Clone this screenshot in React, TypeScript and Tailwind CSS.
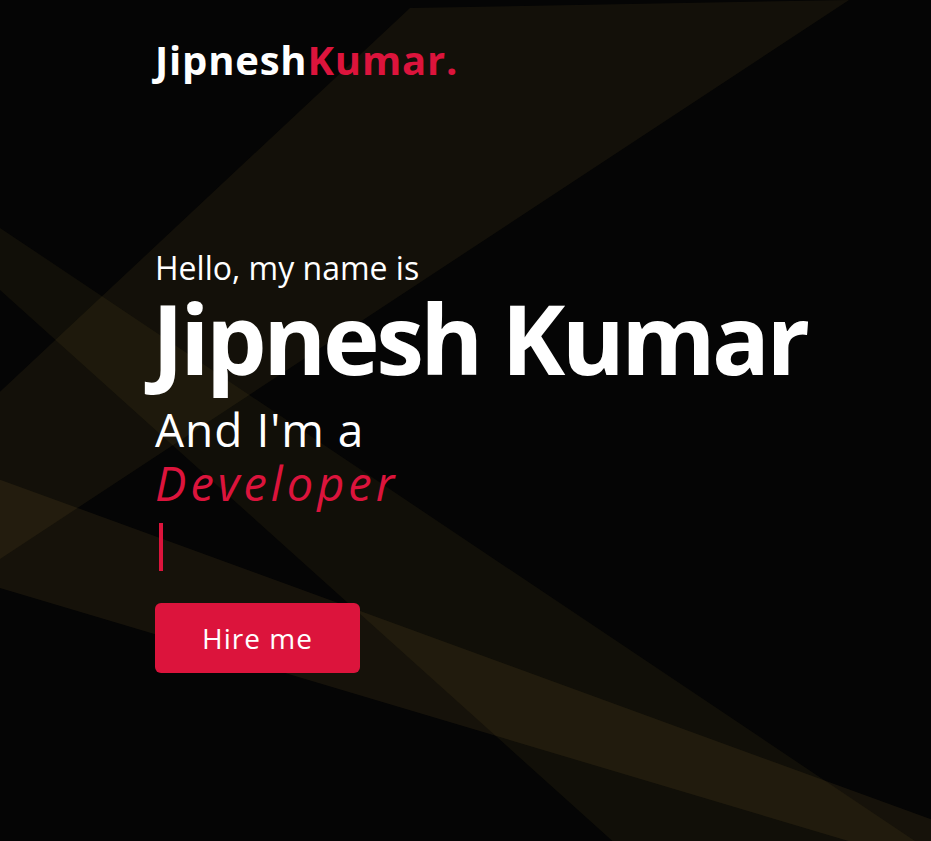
import React from "react";

const Beams: React.FC = () => (
  <svg
    className="pointer-events-none absolute inset-0 h-full w-full"
    viewBox="0 0 931 841"
    preserveAspectRatio="none"
  >
    <g fill="#c9a040">
      <polygon points="-603,956 410,8 849,0" fillOpacity="0.075" />
      <polygon points="-270,47 1000,898 678,900" fillOpacity="0.065" />
      <polygon points="-10,476 1100,881 1100,916 -10,585" fillOpacity="0.09" />
    </g>
  </svg>
);

const App: React.FC = () => {
  return (
    <div className="relative h-[841px] w-full overflow-hidden bg-[#050505] font-['Open_Sans',sans-serif] text-white">
      <Beams />

      {/* Header */}
      <header className="relative px-[155px] pt-[40px]">
        <div className="text-[40px] leading-none font-bold tracking-[0.8px] whitespace-nowrap">
          Jipnesh<span className="text-[#dc143c]">Kumar.</span>
        </div>
      </header>

      {/* Hero */}
      <section className="relative flex flex-col items-start px-[155px] pt-[172px]">
        <p className="text-[32px] leading-none whitespace-nowrap">Hello, my name is</p>
        <h1 className="mt-[6px] -ml-[3px] text-[96px] leading-none font-bold tracking-[-3.5px] whitespace-nowrap">
          Jipnesh Kumar
        </h1>
        <p className="mt-[20px] text-[46px] leading-none tracking-[1px] whitespace-nowrap">
          And I'm a
        </p>
        <p className="mt-[8px] text-[47px] leading-none tracking-[4px] text-[#dc143c] italic">
          Developer
        </p>
        <span className="mt-[16px] ml-[4px] h-[48px] w-[4px] bg-[#dc143c]" />
        <button className="mt-[32px] flex h-[70px] w-[205px] items-center justify-center rounded-md bg-[#dc143c] text-[28px] tracking-[1px] text-white">
          Hire me
        </button>
      </section>
    </div>
  );
};

export default App;
